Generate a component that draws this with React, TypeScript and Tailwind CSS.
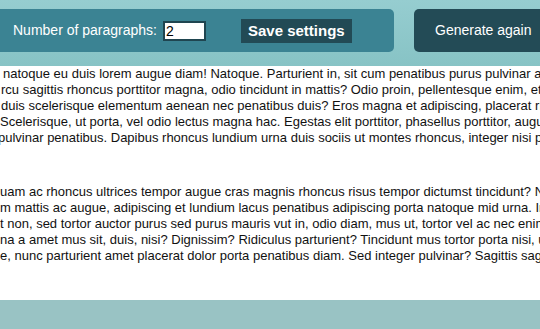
const paragraphs: { offset: string; text: string }[][] = [
  [
    { offset: "ml-[3px]", text: "natoque eu duis lorem augue diam! Natoque. Parturient in, sit cum penatibus purus pulvinar arcu" },
    { offset: "ml-[1px]", text: "rcu sagittis rhoncus porttitor magna, odio tincidunt in mattis? Odio proin, pellentesque enim, et" },
    { offset: "ml-[1px]", text: "duis scelerisque elementum aenean nec penatibus duis? Eros magna et adipiscing, placerat rhoncus" },
    { offset: "ml-0", text: "Scelerisque, ut porta, vel odio lectus magna hac. Egestas elit porttitor, phasellus porttitor, augue" },
    { offset: "-ml-[2px]", text: "pulvinar penatibus. Dapibus rhoncus lundium urna duis sociis ut montes rhoncus, integer nisi pulvinar" },
  ],
  [
    { offset: "ml-0", text: "uam ac rhoncus ultrices tempor augue cras magnis rhoncus risus tempor dictumst tincidunt? Nunc" },
    { offset: "ml-0", text: "m mattis ac augue, adipiscing et lundium lacus penatibus adipiscing porta natoque mid urna. In" },
    { offset: "ml-0", text: "t non, sed tortor auctor purus sed purus mauris vut in, odio diam, mus ut, tortor vel ac nec enim" },
    { offset: "ml-0", text: "na a amet mus sit, duis, nisi? Dignissim? Ridiculus parturient? Tincidunt mus tortor porta nisi, ut" },
    { offset: "ml-0", text: "e, nunc parturient amet placerat dolor porta penatibus diam. Sed integer pulvinar? Sagittis sagittis" },
  ],
]

export default function App() {
  return (
    <div className="w-[540px] h-[329px] overflow-hidden font-['Liberation_Sans',Arial,sans-serif] bg-[#99c3c4]">
      {/* Toolbar */}
      <div className="h-[66px] bg-gradient-to-b from-[#96cdd0] to-[#87c3c5] pt-[9px]">
        <div className="flex gap-[20px] h-[43px]">
          <div className="-ml-[10px] w-[404px] shrink-0 flex items-center pl-[23px] bg-[#3b8393] rounded-[5px]">
            <label className="text-[14px] text-white">Number of paragraphs:</label>
            <input
              defaultValue="2"
              className="ml-[6px] w-[43px] h-[20px] bg-white border-2 border-[#1f4550] text-[14px] text-black leading-none px-[1px] outline-none"
            />
            <button className="ml-[35px] h-[24px] px-[7px] bg-[#224a55] text-white font-bold text-[15px] leading-none">
              Save settings
            </button>
          </div>
          <button className="shrink-0 h-[43px] pl-[21px] pr-[20px] bg-[#234b56] text-white text-[14px] rounded-[5px] whitespace-nowrap">
            Generate again
          </button>
        </div>
      </div>

      {/* Generated text */}
      <div className="h-[234px] bg-white overflow-hidden text-[13px] leading-[16px] text-[#111]">
        {paragraphs.map((lines, i) => (
          <div key={i} className={i === 0 ? "mb-[38px]" : ""}>
            {lines.map((line, j) => (
              <div key={j} className={`whitespace-nowrap ${line.offset}`}>
                {line.text}
              </div>
            ))}
          </div>
        ))}
      </div>
    </div>
  )
}
